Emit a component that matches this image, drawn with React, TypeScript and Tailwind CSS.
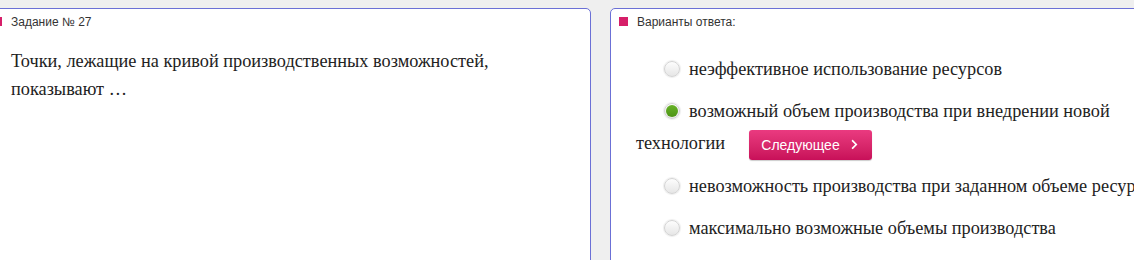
import { FaChevronRight } from 'react-icons/fa'

const options = [
  { id: 1, text: 'неэффективное использование ресурсов', checked: false },
  { id: 2, text: 'возможный объем производства при внедрении новой технологии', checked: true },
  { id: 3, text: 'невозможность производства при заданном объеме ресурсов', checked: false },
  { id: 4, text: 'максимально возможные объемы производства', checked: false },
]

function Radio({ checked }: { checked: boolean }) {
  return (
    <span className="relative mr-[9px] inline-block h-[16px] w-[16px] rounded-full border border-[#d4d4d4] bg-gradient-to-b from-[#fdfdfd] to-[#e6e6e6] align-[-2px] shadow-[0_0_1px_1px_#eeeeee]">
      {checked && (
        <span className="absolute inset-[1px] rounded-full bg-gradient-to-b from-[#67b227] to-[#4e9416]" />
      )}
    </span>
  )
}

function PanelHeader({ title }: { title: string }) {
  return (
    <div className="flex h-[9px] items-center gap-[9px]">
      <span className="h-[9px] w-[9px] shrink-0 bg-[#d61f69]" />
      <span className="font-['Liberation_Sans',Arial,sans-serif] text-[12px] leading-none text-[#333]">
        {title}
      </span>
    </div>
  )
}

export default function App() {
  return (
    <div className="h-[260px] w-full overflow-hidden bg-[#efefef]">
      <div className="ml-[-16px] flex gap-[19px] pt-2">
        <section className="h-[300px] w-[607px] shrink-0 rounded-[5px] border border-[#6b70d6] bg-white pl-[8px] pt-[8px]">
          <PanelHeader title="Задание № 27" />
          <p className="mt-[21px] pl-[18px] pr-[60px] font-['Liberation_Serif','Times_New_Roman',serif] text-[18.3px] leading-[28px] text-[#222]">
            Точки, лежащие на кривой производственных возможностей, показывают …
          </p>
        </section>

        <section className="h-[300px] w-[607px] shrink-0 rounded-[5px] border border-[#6b70d6] bg-white pl-[8px] pt-[8px]">
          <PanelHeader title="Варианты ответа:" />
          <div className="mt-[27px] pl-[17px] pr-[30px] font-['Liberation_Serif','Times_New_Roman',serif] text-[18.3px] leading-[32px] text-[#222]">
            {options.map((o) => (
              <div key={o.id} className="mb-[10px] indent-[28px]">
                <Radio checked={o.checked} />
                {o.text}
                {o.checked && (
                  <button className="ml-[24px] inline-flex h-[30px] w-[123px] items-center justify-center gap-[9px] rounded-[3px] bg-gradient-to-b from-[#ea3a80] to-[#c80f59] align-middle indent-0 font-['Liberation_Sans',Arial,sans-serif] text-[14px] leading-none text-white shadow-[0_1px_1px_rgba(0,0,0,0.2)]">
                    Следующее
                    <FaChevronRight size={11} />
                  </button>
                )}
              </div>
            ))}
          </div>
        </section>
      </div>
    </div>
  )
}
